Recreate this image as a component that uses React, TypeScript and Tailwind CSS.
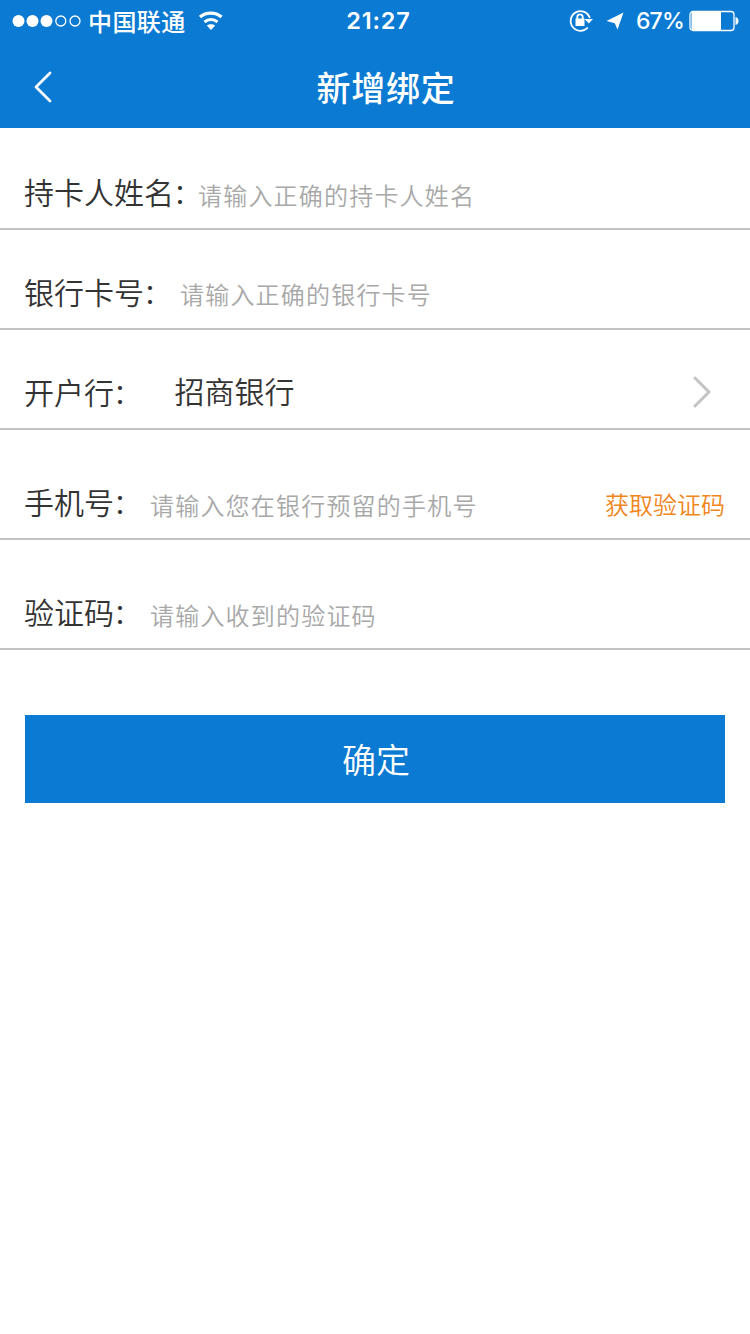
import type { ReactNode } from 'react'

function StatusBar() {
  return (
    <div className="flex h-10 items-center justify-between pl-3 pr-[11px] pt-[1px] text-white">
      <div className="flex w-[240px] items-center">
        <svg width="70" height="14" viewBox="0 0 70 14" fill="currentColor">
          <circle cx="6.5" cy="7" r="6" />
          <circle cx="20.5" cy="7" r="6" />
          <circle cx="34.5" cy="7" r="6" />
          <circle cx="48.8" cy="7" r="5" fill="none" stroke="currentColor" strokeWidth="1.3" />
          <circle cx="63" cy="7" r="5" fill="none" stroke="currentColor" strokeWidth="1.3" />
        </svg>
        <span className="ml-[6px] text-[24px] font-medium leading-10 tracking-[0.4px]">中国联通</span>
        <svg className="ml-[12px]" width="26" height="20" viewBox="0 0 26 20" fill="none" stroke="currentColor">
          <path d="M2 6C8 .8 17.500.8 23.500 6" strokeWidth="3.400" />
          <path d="M6.500 11c3.800-3.200 9.200-3.200 13 0" strokeWidth="3" />
          <path d="M13 19l-4.200-4.500c2.400-1.800 6-1.800 8.400 0z" fill="currentColor" stroke="none" />
        </svg>
      </div>
      <span className="pl-[6px] font-['Inter','Liberation_Sans',sans-serif] text-[23.5px] font-semibold leading-10 tracking-[0.800px]">
        21:27
      </span>
      <div className="flex w-[240px] items-center justify-end">
        {/* rotation lock */}
        <svg width="26" height="24" viewBox="0 0 26 24" fill="none" stroke="currentColor" strokeWidth="1.8">
          <path d="M21.800 9A9.800 9.800 0 1 0 19.800 18.500" />
          <path d="M16.500 10H25l-4.200 4.500z" fill="currentColor" stroke="none" />
          <rect x="7.500" y="9.500" width="9" height="7.500" fill="currentColor" stroke="none" />
          <path d="M9.300 10.500V8a2.700 2.700 0 0 1 5.400 0v2.500" />
        </svg>
        <svg className="ml-[12px]" width="18" height="18" viewBox="0 0 18 18" fill="currentColor">
          <path d="M17.500.5L11.500 17.500 8.800 11.200.5 9z" />
        </svg>
        <span className="ml-[12px] font-['Inter','Liberation_Sans',sans-serif] text-[23px] font-medium leading-10 tracking-[-0.800px]">
          67%
        </span>
        <svg className="ml-[5px]" width="50" height="22" viewBox="0 0 50 22">
          <rect x="1" y="1.500" width="44" height="19" rx="3" fill="none" stroke="currentColor" strokeWidth="1.300" />
          <path d="M4 2h28v18H4a1.500 1.500 0 0 1-1.500-1.500V3.500A1.500 1.500 0 0 1 4 2z" fill="currentColor" />
          <path d="M46.500 7c2 .5 3 2 3 4s-1 3.500-3 4z" fill="currentColor" />
        </svg>
      </div>
    </div>
  )
}

function NavBar() {
  return (
    <div className="grid h-[88px] grid-cols-[100px_1fr_78px] items-center pt-[6px] text-white">
      <button className="pl-[33px]">
        <svg width="20" height="32" viewBox="0 0 20 32" fill="none" stroke="currentColor" strokeWidth="2.800" strokeLinecap="round" strokeLinejoin="round">
          <path d="M17 2L3 16l14 14" />
        </svg>
      </button>
      <h1 className="text-center text-[34px] font-medium leading-[50px] tracking-[0.8px]">新增绑定</h1>
    </div>
  )
}

type FieldProps = {
  label: string
  className: string
  children: ReactNode
}

function Field({ label, className, children }: FieldProps) {
  return (
    <div className={`flex items-end border-b-2 border-[#c3c3c3] pb-[13px] pl-[24px] pr-[25px] ${className}`}>
      <span className="mb-[1px] shrink-0 text-[30px] leading-[44px] text-[#333]">
        {label}
        {/* half-width colon */}
        <span className="-ml-[1px] mr-[1px] text-[28px] [font-feature-settings:'halt']">：</span>
      </span>
      {children}
    </div>
  )
}

function Hint({ text, className }: { text: string; className: string }) {
  return <span className={`text-[24px] leading-[36px] tracking-[1.200px] text-[#a8a8a8] ${className}`}>{text}</span>
}

export default function App() {
  return (
    <div className="min-h-[1334px] w-[750px] bg-white font-['Noto_Sans_CJK_SC',sans-serif] font-[350]">
      <header className="bg-[#0a7ad2]">
        <StatusBar />
        <NavBar />
      </header>

      <main>
        <Field label="持卡人姓名" className="h-[102px]">
          <Hint text="请输入正确的持卡人姓名" className="mb-[2px] ml-[10px]" />
        </Field>
        <Field label="银行卡号" className="h-[100px]">
          <Hint text="请输入正确的银行卡号" className="mb-[3px] ml-[22px]" />
        </Field>
        <Field label="开户行" className="h-[100px]">
          <span className="mb-[3px] ml-[46.5px] text-[30px] leading-[44px] text-[#333]">招商银行</span>
          <svg className="mb-[7px] ml-auto mr-[13px]" width="20" height="32" viewBox="0 0 20 32" fill="none" stroke="#c3c3c3" strokeWidth="3" strokeLinecap="round" strokeLinejoin="round">
            <path d="M3 2l14 14L3 30" />
          </svg>
        </Field>
        <Field label="手机号" className="h-[110px]">
          <Hint text="请输入您在银行预留的手机号" className="mb-[2px] ml-[22px]" />
          <button className="mb-[3px] ml-auto text-[24px] leading-[36px] text-[#f08519]">获取验证码</button>
        </Field>
        <Field label="验证码" className="h-[110px]">
          <Hint text="请输入收到的验证码" className="mb-[2px] ml-[22px]" />
        </Field>

        <div className="px-[25px] pt-[65px]">
          <button className="h-[88px] w-full bg-[#0a7ad2] pb-[2px] pl-[2px] text-[34px] text-white">确定</button>
        </div>
      </main>
    </div>
  )
}
